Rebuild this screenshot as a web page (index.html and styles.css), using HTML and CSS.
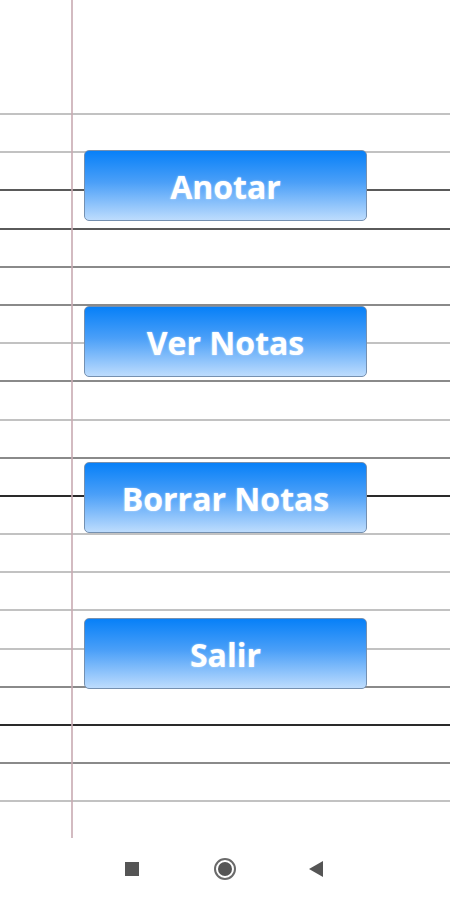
FILE: index.html
```html
<!DOCTYPE html>
<html lang="es">
<head>
<meta charset="utf-8">
<title>Notas</title>
<link rel="stylesheet" href="styles.css">
</head>
<body>
<main class="paper">
  <div class="rules">
    <div class="rule light"></div>
    <div class="rule light"></div>
    <div class="rule dark"></div>
    <div class="rule dark"></div>
    <div class="rule mid"></div>
    <div class="rule mid"></div>
    <div class="rule light"></div>
    <div class="rule mid"></div>
    <div class="rule light"></div>
    <div class="rule mid"></div>
    <div class="rule darkest"></div>
    <div class="rule light"></div>
    <div class="rule light"></div>
    <div class="rule light"></div>
    <div class="rule light"></div>
    <div class="rule mid"></div>
    <div class="rule darkest"></div>
    <div class="rule mid"></div>
    <div class="rule light"></div>
    <div class="rule light"></div>
  </div>
  <div class="margin-line"></div>
  <div class="menu">
    <button class="btn">Anotar</button>
    <button class="btn">Ver Notas</button>
    <button class="btn">Borrar Notas</button>
    <button class="btn">Salir</button>
  </div>
</main>
<nav class="navbar">
  <span class="nav-square"></span>
  <span class="nav-home"><span class="nav-home-dot"></span></span>
  <svg class="nav-back" width="14" height="16" viewBox="0 0 14 16"><polygon points="14,0 14,16 0,8" fill="#555"/></svg>
</nav>
</body>
</html>
```
FILE: styles.css
```css
html, body {
  margin: 0;
  padding: 0;
  background: #ffffff;
}
body {
  width: 450px;
  height: 900px;
  overflow: hidden;
  font-family: "Open Sans", "DejaVu Sans", sans-serif;
}
.paper {
  display: grid;
  height: 838px;
  overflow: hidden;
}
.rules, .margin-line, .menu {
  grid-area: 1 / 1;
}
.rules {
  display: flex;
  flex-direction: column;
  padding-top: 113px;
}
.rule {
  height: 36.2px;
  border-top: 2px solid #bbbbbb;
  flex: none;
}
.rule.light { border-top-color: #c2c2c2; }
.rule.mid { border-top-color: #8a8a8a; }
.rule.dark { border-top-color: #5a5a5a; }
.rule.darkest { border-top-color: #2a2a2a; }
.margin-line {
  margin-left: 71px;
  width: 2px;
  background: rgba(200, 170, 178, 0.8);
}
.menu {
  display: flex;
  flex-direction: column;
  align-items: flex-start;
  padding-top: 150px;
  padding-left: 84px;
  gap: 85px;
}
.btn {
  width: 283px;
  height: 71px;
  border: 1px solid #7590b0;
  border-radius: 5px;
  background: linear-gradient(to bottom, #0780f8 0%, #4a9ff8 45%, #bddcfd 100%);
  color: #ffffff;
  font-family: "Open Sans", "DejaVu Sans", sans-serif;
  font-weight: 700;
  font-size: 32px;
  line-height: 1;
  padding: 2px 0 0 0;
  text-shadow: 0 0 2px rgba(255, 255, 255, 0.6);
  box-sizing: border-box;
  cursor: pointer;
}
.navbar {
  height: 62px;
  display: flex;
  align-items: center;
  background: #ffffff;
}
.nav-square {
  width: 14px;
  height: 14px;
  background: #555555;
  margin-left: 125px;
}
.nav-home {
  width: 22px;
  height: 22px;
  box-sizing: border-box;
  border: 2px solid #6a6a6a;
  border-radius: 50%;
  margin-left: 75px;
  display: flex;
  align-items: center;
  justify-content: center;
}
.nav-home-dot {
  width: 14px;
  height: 14px;
  border-radius: 50%;
  background: #555555;
}
.nav-back {
  margin-left: 73px;
}
```
